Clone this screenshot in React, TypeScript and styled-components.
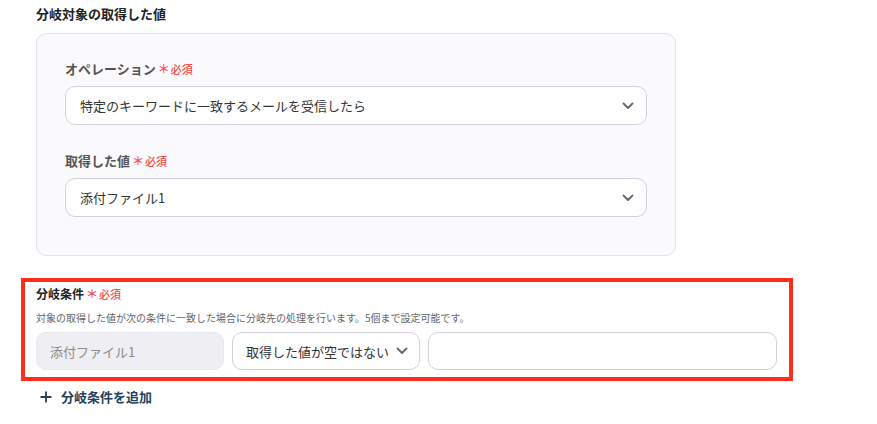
import React from "react"
import styled, { createGlobalStyle } from "styled-components"

const GlobalStyle = createGlobalStyle`
    body {
        margin: 0;
        background: #ffffff;
        font-family: "Noto Sans CJK JP", "Noto Sans", sans-serif;
        color: #333;
    }
`

const Page = styled.div`
    padding: 5px 0 0 36px;
`

const Title = styled.div`
    font-size: 13px;
    font-weight: 700;
    color: #222;
    line-height: 18px;
`

const Panel = styled.div`
    margin-top: 10px;
    width: 640px;
    box-sizing: border-box;
    padding: 26px 28px 38px;
    background: #faf9fc;
    border: 1px solid #e3e1ea;
    border-radius: 10px;
`

const Field = styled.div<{ $gap?: number }>`
    margin-top: ${({ $gap }) => $gap ?? 0}px;
`

const Label = styled.div<{ $strong?: boolean }>`
    display: flex;
    align-items: baseline;
    gap: 2px;
    font-size: ${({ $strong }) => ($strong ? 12 : 13)}px;
    font-weight: 700;
    line-height: 18px;
    color: ${({ $strong }) => ($strong ? "#222" : "#555")};
`

const Required = styled.span`
    font-size: 11px;
    font-weight: 500;
    color: #f0494b;
    display: inline-flex;
    align-items: center;
    gap: 1px;

    &::before {
        content: "＊";
        font-size: 12px;
    }
`

const Select = styled.div`
    margin-top: 8px;
    box-sizing: border-box;
    width: 100%;
    height: 39px;
    padding: 0 12px 0 14px;
    display: flex;
    align-items: center;
    justify-content: space-between;
    background: #ffffff;
    border: 1px solid #d2d1db;
    border-radius: 10px;
    font-size: 13px;
    color: #333;
`

const Section = styled.div`
    margin: 22px 0 0 -15px;
    width: 772px;
    box-sizing: border-box;
    border: 4px solid #ff2d1e;
    padding: 3px 12px 7px 11px;
`

const Description = styled.div`
    margin-top: 8px;
    font-size: 10px;
    line-height: 14px;
    color: #666;
`

const ConditionRow = styled.div`
    margin-top: 7px;
    display: flex;
    gap: 8px;
`

const Box = styled.div<{ $width: number; $muted?: boolean }>`
    box-sizing: border-box;
    width: ${({ $width }) => $width}px;
    height: 38px;
    padding: 0 11px 0 13px;
    display: flex;
    align-items: center;
    justify-content: space-between;
    gap: 6px;
    white-space: nowrap;
    background: ${({ $muted }) => ($muted ? "#efeef3" : "#ffffff")};
    border: 1px solid ${({ $muted }) => ($muted ? "#e8e7ed" : "#d2d1db")};
    border-radius: 10px;
    font-size: 13px;
    color: ${({ $muted }) => ($muted ? "#8a8a8a" : "#333")};
`

const AddButton = styled.div`
    margin-top: 6px;
    padding-left: 4px;
    display: flex;
    align-items: center;
    gap: 9px;
    font-size: 13px;
    font-weight: 700;
    color: #233f5c;
`

const Chevron = () => (
    <svg width="12" height="8" viewBox="0 0 12 8" fill="none">
        <path d="M1.5 1.5L6 6L10.5 1.5" stroke="#666" strokeWidth="1.8" strokeLinecap="round" strokeLinejoin="round" />
    </svg>
)

const Plus = () => (
    <svg width="12" height="12" viewBox="0 0 12 12" fill="none">
        <path d="M6 0.5V11.5M0.5 6H11.5" stroke="#233f5c" strokeWidth="1.8" />
    </svg>
)

const App: React.FC = () => (
    <>
        <GlobalStyle />
        <Page>
            <Title>分岐対象の取得した値</Title>
            <Panel>
                <Field>
                    <Label>オペレーション<Required>必須</Required></Label>
                    <Select>
                        特定のキーワードに一致するメールを受信したら
                        <Chevron />
                    </Select>
                </Field>
                <Field $gap={27}>
                    <Label>取得した値<Required>必須</Required></Label>
                    <Select>
                        添付ファイル1
                        <Chevron />
                    </Select>
                </Field>
            </Panel>
            <Section>
                <Label $strong>分岐条件<Required>必須</Required></Label>
                <Description>対象の取得した値が次の条件に一致した場合に分岐先の処理を行います。5個まで設定可能です。</Description>
                <ConditionRow>
                    <Box $width={188} $muted>添付ファイル1</Box>
                    <Box $width={188}>
                        取得した値が空ではない
                        <Chevron />
                    </Box>
                    <Box $width={349} />
                </ConditionRow>
            </Section>
            <AddButton>
                <Plus />
                分岐条件を追加
            </AddButton>
        </Page>
    </>
)

export default App
